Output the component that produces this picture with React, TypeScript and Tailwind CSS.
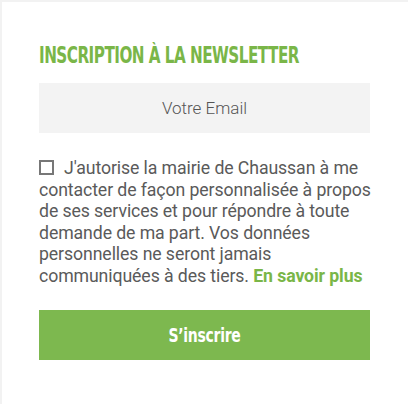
import { useState } from 'react';

const App = () => {
    const [checked, setChecked] = useState(false);

    return (
        <div className="min-h-[404px] w-[408px] overflow-hidden bg-white border-l-2 border-t-2 border-[#f2f2f2] pl-[37px] pr-[34px] pt-[40px]">
            {/* Title */}
            <h2
                className="h-[26px] overflow-hidden text-[23px] leading-[26px] font-bold text-[#7ab648] uppercase tracking-[-0.8px] whitespace-nowrap"
                style={{ fontFamily: '"DejaVu Sans", sans-serif' }}
            >
                <span className="inline-block origin-left scale-x-[0.662]">Inscription à la newsletter</span>
            </h2>

            {/* Email field */}
            <input
                type="email"
                placeholder="Votre Email"
                className="mt-[15px] block w-[331px] h-[50px] bg-[#f3f3f3] text-center text-[17px] font-light text-[#555] placeholder:text-[#555] outline-none"
                style={{ fontFamily: 'Roboto, sans-serif' }}
            />

            {/* Consent */}
            <label
                className="mt-[25px] block w-full text-[17.7px] leading-[21.5px] tracking-[-0.1px] text-[#5a5a5a]"
                style={{ fontFamily: 'Roboto, sans-serif' }}
            >
                <span
                    onClick={() => setChecked(!checked)}
                    className="inline-block align-[-1px] w-[15px] h-[15px] border-2 border-[#777] mr-[10px] bg-white"
                >
                    {checked && <span className="block w-full h-full bg-[#7ab648]" />}
                </span>
                J'autorise la mairie de Chaussan à me contacter de façon personnalisée à propos de ses services et pour répondre à toute demande de ma part. Vos données personnelles ne seront jamais communiquées à des tiers.{' '}
                <a href="#" className="font-bold text-[#7ab648]">
                    En savoir plus
                </a>
            </label>

            {/* Submit */}
            <button
                className="mt-[23px] flex items-center justify-center w-[331px] h-[50px] bg-[#7db84f] text-white text-[20px] font-bold tracking-[-0.4px]"
                style={{ fontFamily: '"DejaVu Sans", sans-serif' }}
            >
                <span className="inline-block scale-x-[0.7]">S’inscrire</span>
            </button>
        </div>
    );
};

export default App;
